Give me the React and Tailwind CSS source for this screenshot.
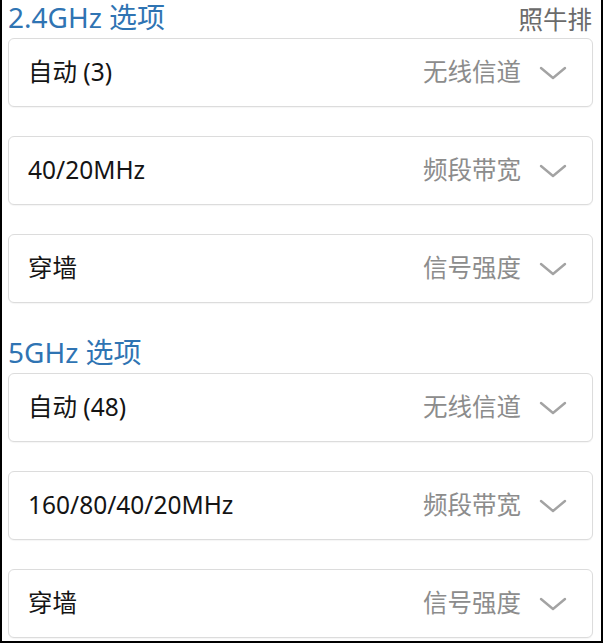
import React from 'react';

const sections = [
  {
    title: '2.4GHz 选项',
    extra: '照牛排',
    rows: [
      { value: '自动 (3)', label: '无线信道' },
      { value: '40/20MHz', label: '频段带宽' },
      { value: '穿墙', label: '信号强度' },
    ],
  },
  {
    title: '5GHz 选项',
    rows: [
      { value: '自动 (48)', label: '无线信道' },
      { value: '160/80/40/20MHz', label: '频段带宽' },
      { value: '穿墙', label: '信号强度' },
    ],
  },
];

function Chevron() {
  return (
    <svg width="28" height="16" viewBox="0 0 28 16" fill="none" className="shrink-0">
      <polyline points="2,3 14,13 26,3" stroke="#a3a3a3" strokeWidth="2.4" strokeLinecap="round" strokeLinejoin="round" />
    </svg>
  );
}

function SelectRow({ value, label }) {
  return (
    <div className="h-[69px] flex items-center justify-between bg-white border border-[#dcdcdc] rounded-[6px] pl-[19px] pr-[25px] shadow-[0_1px_1px_rgba(0,0,0,0.04)]">
      <span className="text-[24.5px] text-[#141414] leading-none">{value}</span>
      <div className="flex items-center gap-[18px]">
        <span className="text-[24.5px] text-[#8c8c8c] leading-none">{label}</span>
        <Chevron />
      </div>
    </div>
  );
}

export default function App() {
  return (
    <div
      className="w-[605px] h-[643px] bg-white overflow-hidden"
      style={{ fontFamily: '"Noto Sans", "Noto Sans CJK SC", sans-serif' }}
    >
      <div className="w-[603px] h-[643px] border-l-2 border-r-2 border-b-2 border-black pl-[6px] pr-[8px] flex flex-col gap-[32px]">
        {sections.map((s) => (
          <div key={s.title} className="flex flex-col">
            <div className="h-[38px] flex items-start justify-between">
              <span className="text-[28px] leading-[35px] text-[#2f74b3]">{s.title}</span>
              {s.extra && (
                <span className="text-[24.5px] leading-[34px] text-[#6b6b6b] mt-[3px] mr-[1px]">{s.extra}</span>
              )}
            </div>
            <div className="flex flex-col gap-[29px]">
              {s.rows.map((r, i) => (
                <SelectRow key={i} {...r} />
              ))}
            </div>
          </div>
        ))}
      </div>
    </div>
  );
}
